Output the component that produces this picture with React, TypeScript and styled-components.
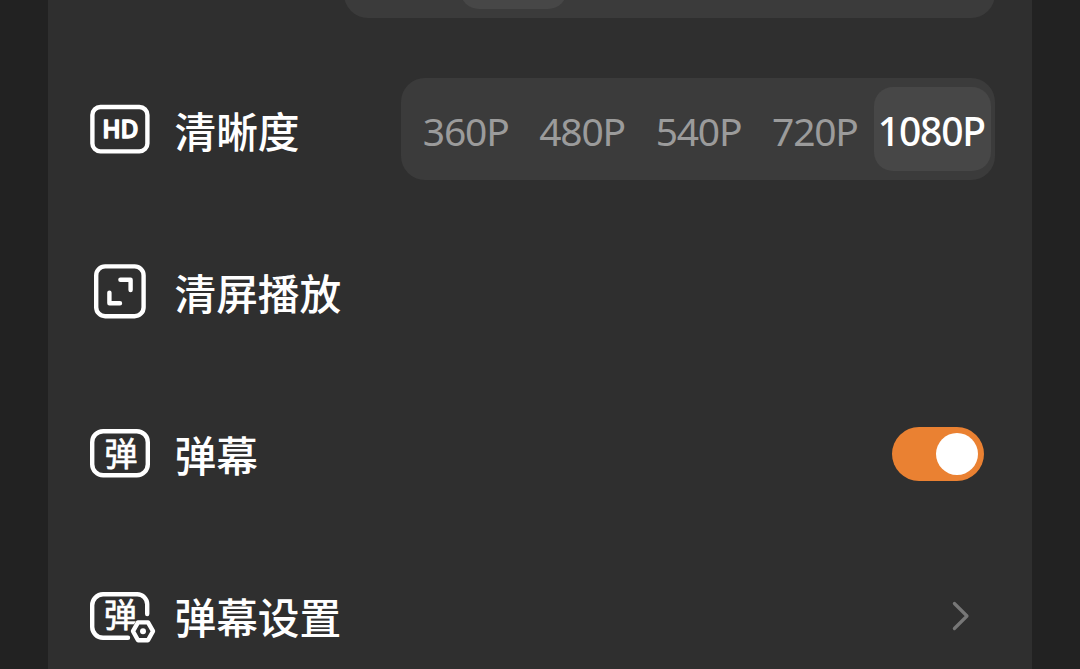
import React, { useState } from "react";
import styled, { createGlobalStyle } from "styled-components";

const GlobalStyle = createGlobalStyle`
  body {
    margin: 0;
    background: #222222;
    overflow: hidden;
  }
`;

const Page = styled.div`
  display: flex;
  justify-content: center;
  width: 100%;
  height: 669px;
  overflow: hidden;
  background: #222222;
  font-family: "Noto Sans CJK SC", sans-serif;
`;

const Panel = styled.div`
  display: flex;
  flex-direction: column;
  justify-content: flex-end;
  width: 984px;
  height: 697px;
  background: #2f2f2f;
`;

const Row = styled.div`
  display: flex;
  flex-shrink: 0;
  align-items: center;
  box-sizing: border-box;
  height: 162px;
  padding: 0 37px 0 38px;
`;

const Icon = styled.svg`
  flex-shrink: 0;
  width: 72px;
  height: 60px;
  fill: none;
  stroke: #ffffff;
  stroke-width: 4.4;
  stroke-linecap: round;
  stroke-linejoin: round;
`;

const IconText = styled.text<{ $latin?: boolean }>`
  font-family: ${(p) =>
    p.$latin ? `"Open Sans", sans-serif` : `"Noto Sans CJK SC", sans-serif`};
  font-size: ${(p) => (p.$latin ? 24.5 : 33)}px;
  font-weight: ${(p) => (p.$latin ? 600 : 400)};
  fill: #ffffff;
  stroke-width: ${(p) => (p.$latin ? 1.3 : 0.7)};
  text-anchor: middle;
`;

const Label = styled.span`
  flex: 1;
  margin-left: 16.5px;
  color: #ffffff;
  font-size: 41.7px;
  font-weight: 500;
  line-height: 60px;
  white-space: nowrap;
`;

const Segments = styled.div<{ $width: number; $inset: number }>`
  display: flex;
  box-sizing: border-box;
  width: ${(p) => p.$width}px;
  height: 102px;
  margin: 0 0 2px auto;
  padding: 9px 4px 9px ${(p) => p.$inset}px;
  border-radius: 24px;
  background: #3b3b3b;
`;

const Segment = styled.button<{ $active: boolean }>`
  display: flex;
  flex: 1 1 0;
  align-items: center;
  justify-content: center;
  min-width: 0;
  padding: ${(p) => (p.$active ? "3px 2px 0 0" : "3px 1px 0 0")};
  border: none;
  border-radius: 19px;
  background: ${(p) => (p.$active ? "#474747" : "transparent")};
  color: ${(p) => (p.$active ? "#ffffff" : "#9b9b9b")};
  font-family: "Noto Sans", sans-serif;
  font-size: 39px;
  font-weight: ${(p) => (p.$active ? 500 : 400)};
  letter-spacing: -1.2px;
`;

const Toggle = styled.button<{ $on: boolean }>`
  display: flex;
  align-items: center;
  justify-content: ${(p) => (p.$on ? "flex-end" : "flex-start")};
  box-sizing: border-box;
  width: 92.5px;
  height: 54px;
  margin-right: 11px;
  padding: 0 6px;
  border: none;
  border-radius: 27px;
  background: ${(p) => (p.$on ? "#ea8132" : "#474747")};
`;

const Knob = styled.span`
  width: 42px;
  height: 42px;
  border-radius: 50%;
  background: #ffffff;
`;

const Chevron = styled.svg`
  width: 20px;
  height: 32px;
  margin-right: 25px;
  fill: none;
  stroke: #777777;
  stroke-width: 3.2;
  stroke-linecap: round;
  stroke-linejoin: round;
`;

const qualities = ["360P", "480P", "540P", "720P", "1080P"];

function HdIcon() {
  return (
    <Icon viewBox="0 0 72 60">
      <rect x="6.4" y="7" width="55" height="44.4" rx="8" />
      <IconText x="34.4" y="38.2" $latin>
        HD
      </IconText>
    </Icon>
  );
}

function ClearScreenIcon() {
  return (
    <Icon viewBox="0 0 72 60">
      <rect x="10.2" y="4.4" width="47.4" height="49.8" rx="9" />
      <path d="M34.4 17.8H44.6V28M23.4 30.6V41.2H34" />
    </Icon>
  );
}

function DanmakuIcon() {
  return (
    <Icon viewBox="0 0 72 60">
      <rect x="6.2" y="7.2" width="55.6" height="44" rx="11" />
      <IconText x="35" y="41.5">
        弹
      </IconText>
    </Icon>
  );
}

function DanmakuSettingsIcon() {
  return (
    <Icon viewBox="0 0 72 60">
      <path d="M61.2 28V18.3A10 10 0 0 0 51.2 8.3H17A11 11 0 0 0 6.2 19.3V41A11 11 0 0 0 17 51.8H42" />
      <IconText x="34.5" y="41.3">
        弹
      </IconText>
      <path
        d="M46.6 45.2L51.8 36.2H62.2L67.4 45.2L62.2 54.4H51.8Z"
        fill="#2f2f2f"
        stroke="#2f2f2f"
      />
      <path d="M47 45.2L52 36.4H62L67 45.2L62 54.2H52Z" fill="#2f2f2f" />
      <circle cx="57" cy="45.2" r="3" fill="#ffffff" stroke="none" />
    </Icon>
  );
}

function App() {
  const [quality, setQuality] = useState("1080P");
  const [danmaku, setDanmaku] = useState(true);

  return (
    <Page>
      <GlobalStyle />
      <Panel>
        <Row>
          <Segments $width={651} $inset={10}>
            {[0, 1, 2, 3, 4, 5].map((i) => (
              <Segment key={i} $active={i === 1} />
            ))}
          </Segments>
        </Row>
        <Row>
          <HdIcon />
          <Label>清晰度</Label>
          <Segments $width={594} $inset={7}>
            {qualities.map((q) => (
              <Segment
                key={q}
                $active={q === quality}
                onClick={() => setQuality(q)}
              >
                {q}
              </Segment>
            ))}
          </Segments>
        </Row>
        <Row>
          <ClearScreenIcon />
          <Label>清屏播放</Label>
        </Row>
        <Row>
          <DanmakuIcon />
          <Label>弹幕</Label>
          <Toggle $on={danmaku} onClick={() => setDanmaku(!danmaku)}>
            <Knob />
          </Toggle>
        </Row>
        <Row>
          <DanmakuSettingsIcon />
          <Label>弹幕设置</Label>
          <Chevron viewBox="0 0 20 32">
            <path d="M4.4 3.5L17 16L4.4 28.5" />
          </Chevron>
        </Row>
      </Panel>
    </Page>
  );
}

export default App;
